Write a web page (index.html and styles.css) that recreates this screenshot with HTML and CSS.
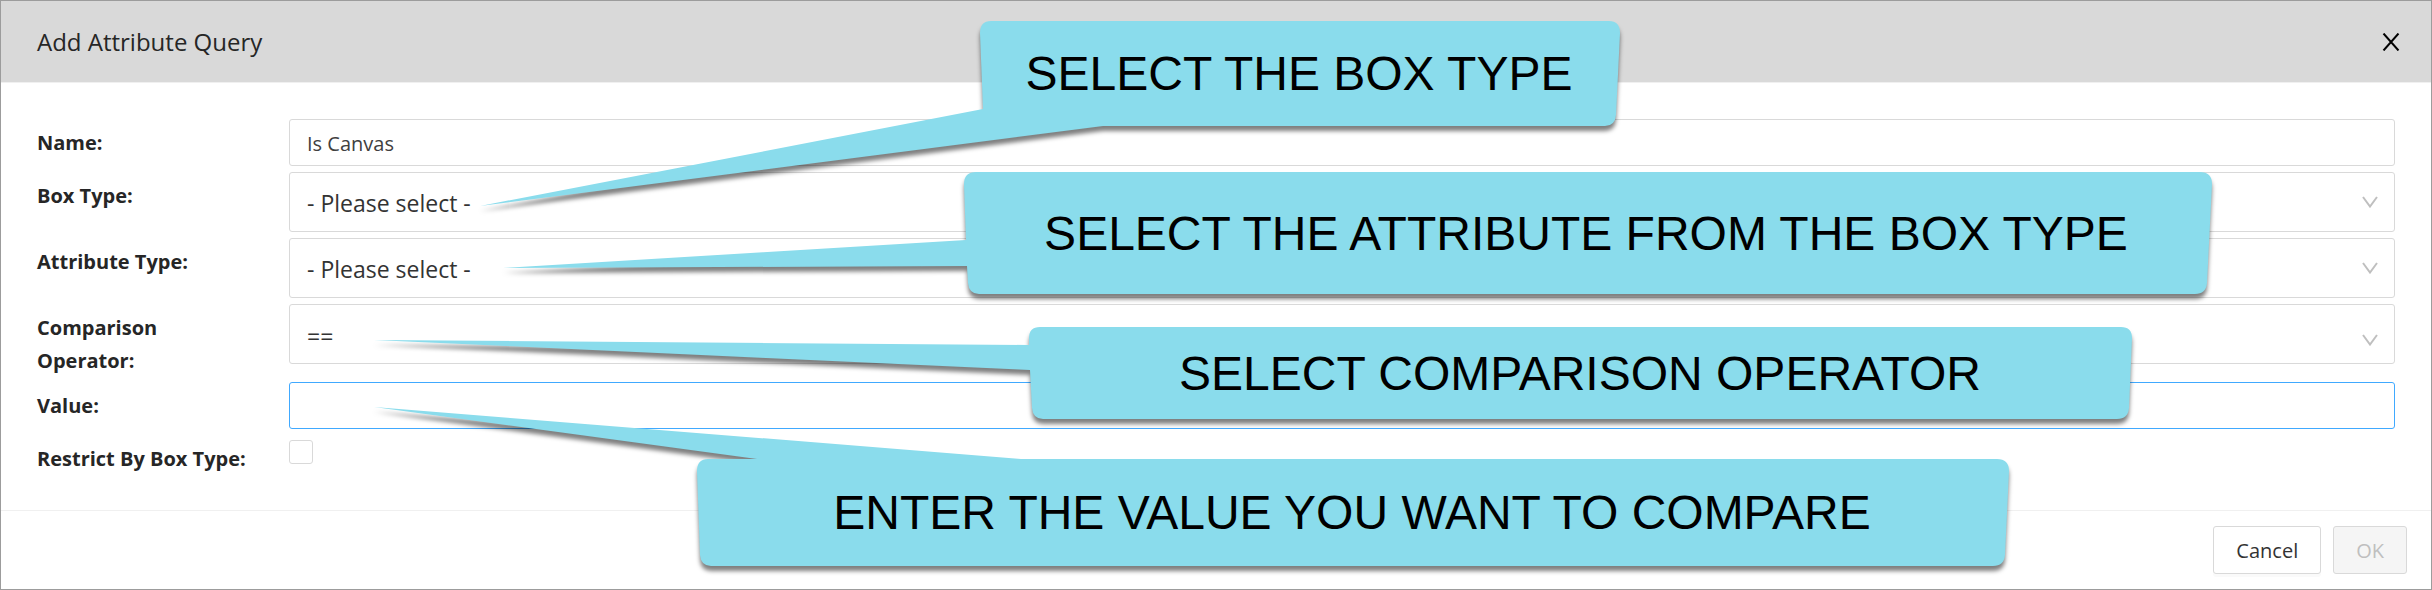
FILE: index.html
```html
<!DOCTYPE html>
<html lang="en">
<head>
<meta charset="utf-8">
<title>Add Attribute Query</title>
<link rel="stylesheet" href="styles.css">
</head>
<body>
<form class="dialog">
  <header class="dialog-header">
    <h1 class="dialog-title">Add Attribute Query</h1>
    <button class="close" type="button" aria-label="Close">
      <svg class="close-icon" viewBox="0 0 18 18" aria-hidden="true"><path d="M1.5 0.5L16.5 17.5M16.5 0.5L1.5 17.5"/></svg>
    </button>
  </header>
  <div class="dialog-body">
    <div class="row">
      <label class="label" for="name">Name:</label>
      <input class="field" id="name" type="text" value="Is Canvas">
    </div>
    <div class="row">
      <label class="label" for="box">Box Type:</label>
      <div class="select-wrap">
        <select class="field select" id="box"><option>- Please select -</option></select>
        <svg class="chevron" viewBox="0 0 16 12" aria-hidden="true"><path d="M1 1L8 10.500L15 1"/></svg>
      </div>
    </div>
    <div class="row">
      <label class="label" for="attr">Attribute Type:</label>
      <div class="select-wrap">
        <select class="field select" id="attr"><option>- Please select -</option></select>
        <svg class="chevron" viewBox="0 0 16 12" aria-hidden="true"><path d="M1 1L8 10.500L15 1"/></svg>
      </div>
    </div>
    <div class="row">
      <label class="label label-tall" for="op">Comparison Operator:</label>
      <div class="select-wrap">
        <select class="field select select-low" id="op"><option>==</option></select>
        <svg class="chevron chevron-low" viewBox="0 0 16 12" aria-hidden="true"><path d="M1 1L8 10.500L15 1"/></svg>
      </div>
    </div>
    <div class="row">
      <label class="label" for="value">Value:</label>
      <input class="field field-active" id="value" type="text">
    </div>
    <div class="row">
      <label class="label" for="restrict">Restrict By Box Type:</label>
      <input class="check" id="restrict" type="checkbox">
    </div>
  </div>
  <footer class="dialog-footer">
    <button class="btn" type="button">Cancel</button>
    <button class="btn" type="submit" disabled>OK</button>
  </footer>
</form>
<svg class="callouts" width="2432" height="590" viewBox="0 0 2432 590">
  <g class="callout">
    <path d="M991 21H1609Q1620 21 1620 33L1616 115Q1615 126 1605 126H1103L480 206L983 109L980 33Q980 21 991 21Z"/>
    <text x="1299" y="90">SELECT THE BOX TYPE</text>
  </g>
  <g class="callout">
    <path d="M976 172H2200Q2212 172 2212 184L2207 283Q2206 294 2195 294H979Q969 294 968 283L967 266L503 268L966 240L964 184Q964 172 976 172Z"/>
    <text x="1586" y="250">SELECT THE ATTRIBUTE FROM THE BOX TYPE</text>
  </g>
  <g class="callout">
    <path d="M1040 327H2121Q2132 327 2132 338L2129 408Q2128 419 2117 419H1043Q1033 419 1032 408L1030 370L374 340L1029 345V338Q1029 327 1040 327Z"/>
    <text x="1580" y="390">SELECT COMPARISON OPERATOR</text>
  </g>
  <g class="callout">
    <path d="M708 459H757L374 407L1021 459H1997Q2009 459 2009 471L2005 555Q2004 566 1993 566H711Q701 566 700 555L697 471Q697 459 708 459Z"/>
    <text x="1352" y="529">ENTER THE VALUE YOU WANT TO COMPARE</text>
  </g>
</svg>
</body>
</html>
```
FILE: styles.css
```css
* {
  box-sizing: border-box;
}

body {
  margin: 0;
  position: relative;
  background: #fff;
  color: #262626;
  font-family: "Open Sans", "Noto Sans", sans-serif;
  font-size: 20px;
}

.dialog {
  min-height: 100vh;
  display: flex;
  flex-direction: column;
  border: 1px solid #9c9c9c;
}

.dialog-header {
  display: flex;
  align-items: center;
  justify-content: space-between;
  height: 82px;
  padding: 0 31px 0 36px;
  background: #d9d9d9;
  border-bottom: 1px solid #f0f0f0;
}

.dialog-title {
  margin: 0;
  font-size: 24px;
  font-weight: 500;
}

.close {
  display: flex;
  padding: 0;
  border: 0;
  background: none;
}

.close-icon {
  width: 18px;
  height: 18px;
  fill: none;
  stroke: #000;
  stroke-width: 2;
}

.dialog-body {
  flex: 1;
  display: flex;
  flex-direction: column;
  gap: 6px;
  padding: 36px 36px 0;
}

.row {
  display: grid;
  grid-template-columns: 216px 1fr;
  column-gap: 36px;
  align-items: start;
}

.label {
  padding-top: 7px;
  line-height: 33px;
  font-weight: 700;
}

.label-tall {
  margin-bottom: -1px;
}

.field {
  display: block;
  width: 100%;
  height: 47px;
  padding: 2px 17px 0;
  border: 1px solid #d9d9d9;
  border-radius: 3px;
  background: #fff;
  color: #404040;
  font: inherit;
  outline: none;
}

.field-active {
  border-color: #40a9ff;
}

.select-wrap {
  display: grid;
  align-items: center;
}

.select-wrap > * {
  grid-area: 1 / 1;
}

.select {
  appearance: none;
  height: 60px;
  color: #333;
  font-size: 23px;
}

.select-low {
  padding-top: 4px;
}

.chevron {
  justify-self: end;
  width: 16px;
  height: 12px;
  margin-right: 17px;
  fill: none;
  stroke: #bfbfbf;
  stroke-width: 2;
  pointer-events: none;
}

.chevron-low {
  margin-top: 12px;
}

.check {
  appearance: none;
  width: 24px;
  height: 24px;
  margin: 5px 0 0;
  border: 1px solid #d9d9d9;
  border-radius: 3px;
  background: #fff;
}

.dialog-footer {
  display: flex;
  justify-content: flex-end;
  gap: 12px;
  padding: 15px 24px;
  border-top: 1px solid #f0f0f0;
}

.btn {
  height: 48px;
  padding: 1px 22px 0;
  border: 1px solid #d9d9d9;
  border-radius: 3px;
  background: #fff;
  box-shadow: 0 3px 0 #fafafa;
  color: #333;
  font: inherit;
}

.btn:disabled {
  background: #f5f5f5;
  box-shadow: none;
  color: #bfbfbf;
}

.callouts {
  position: absolute;
  left: 0;
  top: 0;
  pointer-events: none;
}

.callout path {
  fill: #8adcec;
  filter: drop-shadow(0 5px 2px rgba(0, 0, 0, 0.5));
}

.callout text {
  fill: #000;
  font-family: "Liberation Sans", Arial, sans-serif;
  font-size: 48px;
  text-anchor: middle;
}
```
